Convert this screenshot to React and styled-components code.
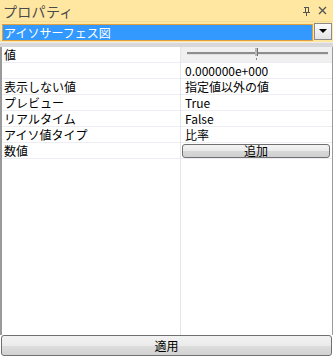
import React from "react";
import styled, { createGlobalStyle } from "styled-components";

const Global = createGlobalStyle`
  html, body { margin: 0; padding: 0; background: #fff; }
  body { font-family: "Noto Sans CJK JP", "Liberation Sans", sans-serif; font-size: 12px; }
  #root { width: 333px; height: 357px; }
`;

const Panel = styled.div`
  width: 333px;
  height: 357px;
  display: flex;
  flex-direction: column;
  background: #ffffff;
  box-sizing: border-box;
  overflow: hidden;
`;

const TitleBar = styled.div`
  height: 21px;
  background: #ffe7a2;
  display: flex;
  align-items: center;
  padding: 0 6px 0 3px;
  color: #4a4a4a;
  font-size: 14px;
  border-bottom: 1px solid #f5dd98;
`;

const Title = styled.div`
  flex: 1;
  line-height: 20px;
  letter-spacing: 0.3px;
`;

const TitleIcons = styled.div`
  display: flex;
  gap: 7px;
  align-items: center;
`;

const ComboRow = styled.div`
  height: 19px;
  display: flex;
  padding: 1px 1px 0 1px;
  background: #ffe7a2;
`;

const ComboField = styled.div`
  flex: 1;
  background: #3399ff;
  color: #fff;
  border: 1px dotted #000;
  outline: 1px solid #e0a040;
  outline-offset: -1px;
  font-size: 12px;
  line-height: 16px;
  padding-left: 1px;
  margin: 1px 0 1px 1px;
`;

const ComboButton = styled.div`
  width: 18px;
  height: 17px;
  margin-left: 1px;
  box-sizing: border-box;
  border: 1px solid #8a8a8a;
  background: linear-gradient(#fbfbfb, #e4e4e4);
  display: flex;
  align-items: center;
  justify-content: center;
`;

const Separator = styled.div`
  height: 4px;
  background: #d8d8da;
  border-top: 1px solid #ececec;
`;

const Grid = styled.div`
  flex: 1;
  display: grid;
  grid-template-columns: 178px 1fr;
  grid-auto-rows: 16px;
  align-content: start;
  border-left: 2px solid #9a9a9a;
  border-right: 1px solid #9a9a9a;
`;

const Cell = styled.div`
  border-bottom: 1px solid #ececf2;
  box-sizing: border-box;
  padding-left: ${(p) => (p.$right ? "4px" : "2px")};
  border-left: ${(p) => (p.$right ? "1px solid #e4e4ec" : "none")};
  background: ${(p) => (p.$gray ? "#f0f0f0" : "#fff")};
  line-height: 15px;
  font-size: 12px;
  color: #000;
  white-space: nowrap;
  display: flex;
  align-items: center;
`;

const FillRow = styled.div`
  grid-column: 1 / 3;
  display: grid;
  grid-template-columns: 178px 1fr;
  height: 180px;
`;

const FillCell = styled.div`
  border-left: ${(p) => (p.$right ? "1px solid #e4e4ec" : "none")};
`;

const Slider = styled.div`
  position: relative;
  flex: 1;
  height: 100%;
  margin-right: 4px;
`;

const Track = styled.div`
  position: absolute;
  left: 2px;
  right: 0;
  top: 5px;
  height: 2px;
  background: #8e8e8e;
  border-bottom: 1px solid #e0e0e0;
`;

const Thumb = styled.div`
  position: absolute;
  left: 70px;
  top: 1px;
  width: 2px;
  height: 8px;
  background: #b8b8b8;
  border-right: 1px solid #707070;
`;

const Tick = styled.div`
  position: absolute;
  left: 71px;
  top: 11px;
  width: 1px;
  height: 2px;
  background: #888;
`;

const SmallButton = styled.button`
  flex: 1;
  height: 14px;
  margin: 0 2px 0 -3px;
  padding: 0;
  border: 1px solid #707070;
  border-radius: 3px;
  background: linear-gradient(#f4f4f4 0%, #eaeaea 50%, #d8d8d8 51%, #d0d0d0 100%);
  font-family: inherit;
  font-size: 12px;
  line-height: 12px;
  color: #000;
`;

const Footer = styled.div`
  height: 21px;
  padding: 0 1px 1px 1px;
  display: flex;
`;

const ApplyButton = styled.button`
  flex: 1;
  height: 21px;
  padding: 0;
  border: 1px solid #707070;
  border-radius: 3px;
  background: linear-gradient(#f2f2f2 0%, #ebebeb 50%, #dddddd 51%, #d2d2d2 100%);
  font-family: inherit;
  font-size: 12px;
  color: #000;
`;

const rows = [
  ["値", "slider"],
  ["", "0.000000e+000"],
  ["表示しない値", "指定値以外の値"],
  ["プレビュー", "True"],
  ["リアルタイム", "False"],
  ["アイソ値タイプ", "比率"],
  ["数値", "button"],
];

export default function App() {
  return (
    <>
      <Global />
      <Panel>
        <TitleBar>
          <Title>プロパティ</Title>
          <TitleIcons>
            <svg width="9" height="10" viewBox="0 0 9 10">
              <path d="M2 1h5M3 1v5M6 1v5M1 6h7M4.5 6v4" stroke="#555" strokeWidth="1" fill="none" shapeRendering="crispEdges" />
            </svg>
            <svg width="9" height="9" viewBox="0 0 9 9">
              <path d="M1 1L8 8M8 1L1 8" stroke="#555" strokeWidth="1.4" />
            </svg>
          </TitleIcons>
        </TitleBar>
        <ComboRow>
          <ComboField>アイソサーフェス図</ComboField>
          <ComboButton>
            <svg width="8" height="5" viewBox="0 0 8 5">
              <path d="M0 0h8L4 4z" fill="#000" />
            </svg>
          </ComboButton>
        </ComboRow>
        <Separator />
        <Grid>
          {rows.map(([k, v], i) => (
            <React.Fragment key={i}>
              <Cell>{k}</Cell>
              {v === "slider" ? (
                <Cell $right $gray>
                  <Slider>
                    <Track />
                    <Thumb />
                    <Tick />
                  </Slider>
                </Cell>
              ) : v === "button" ? (
                <Cell $right>
                  <SmallButton>追加</SmallButton>
                </Cell>
              ) : (
                <Cell $right>{v}</Cell>
              )}
            </React.Fragment>
          ))}
          <FillRow>
            <FillCell />
            <FillCell $right />
          </FillRow>
        </Grid>
        <Footer>
          <ApplyButton>適用</ApplyButton>
        </Footer>
      </Panel>
    </>
  );
}
